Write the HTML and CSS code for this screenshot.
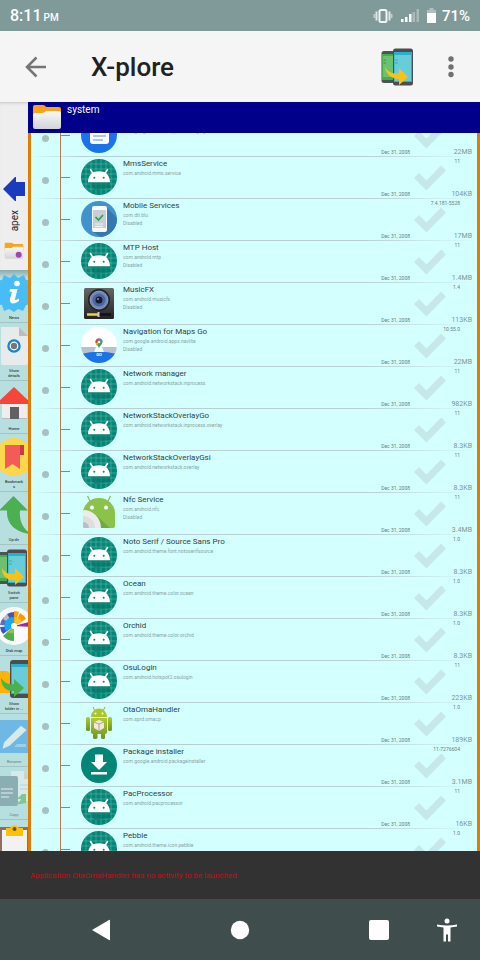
FILE: index.html
```
<!DOCTYPE html>
<html lang="en">
<head>
<meta charset="utf-8">
<meta name="viewport" content="width=device-width, initial-scale=1">
<title>X-plore</title>
<link rel="stylesheet" href="styles.css">
</head>
<body>
<svg class="defs" aria-hidden="true">
  <defs>
    <linearGradient id="g-folder" x1="0" y1="0" x2="0" y2="1"><stop offset="0" stop-color="#f8f8f8"/><stop offset="1" stop-color="#d2d4d8"/></linearGradient>
    <linearGradient id="g-speaker" x1="0" y1="0" x2="0" y2="1"><stop offset="0" stop-color="#666"/><stop offset=".5" stop-color="#444"/><stop offset="1" stop-color="#222"/></linearGradient>
    <linearGradient id="g-bot" x1="0" y1="0" x2="0" y2="1"><stop offset="0" stop-color="#b0cc2e"/><stop offset="1" stop-color="#6f9420"/></linearGradient>
    <clipPath id="c-round"><circle cx="18" cy="18" r="18"/></clipPath>
    <clipPath id="c-nfc"><path d="M2 32V18a16 15 0 0 1 32 0V31a2 2 0 0 1-2 2H3Z"/></clipPath>
    <symbol id="android" viewBox="0 0 36 36">
      <circle cx="18" cy="18" r="18" fill="#048676"/>
      <path clip-path="url(#c-round)" d="M5 0V36M10 0V36M15 0V36M20 0V36M25 0V36M30 0V36M0 5H36M0 10H36M0 15H36M0 20H36M0 25H36M0 30H36" stroke="#8fd0c6" stroke-opacity=".45" stroke-width=".8" fill="none"/>
      <path d="M8 23 14 31 30 29 29 23Z" fill="#037568" opacity=".6"/>
      <path d="M9.500 10.500 12 14.500M26.500 10.500 24 14.500" stroke="#fff" stroke-width="1.500" stroke-linecap="round"/>
      <path d="M7 23.300C7 17 11 12.800 14 12.800Q18 11.800 22 12.800C25 12.800 29 17 29 23.300Z" fill="#fff"/>
      <circle cx="13.300" cy="18.700" r="1" fill="#048676"/><circle cx="22.700" cy="18.700" r="1" fill="#048676"/>
    </symbol>
    <symbol id="check" viewBox="0 0 32 26"><path d="M0 13 5 8 12.500 15.500 27 0.500 32 5.500 12.500 25.500Z" fill="#c6e8e8"/></symbol>
    <symbol id="folder" viewBox="0 0 30 27">
      <path d="M1 3Q1 1 3 1H11Q13 1 14 3H27Q29 3 29 5V14H1Z" fill="#fba41b"/>
      <path d="M1 11Q1 9 3 9H11L14 7H27Q29 7 29 9V23Q29 25 27 25H3Q1 25 1 23Z" fill="url(#g-folder)"/>
    </symbol>
    <symbol id="phones" viewBox="0 0 32 38">
      <rect x=".5" y="3" width="18" height="32" rx="2.500" fill="#4b5354"/><path d="M1 6H13V32H1Z" fill="#48ab51"/><path d="M2 8H13V29H2Z" fill="#6cc070"/>
      <path d="M2.500 12H5M2.500 15H5" stroke="#42934b"/>
      <rect x="12" y=".5" width="20" height="37" rx="2.500" fill="#4c4c51"/><path d="M13 4H31V34H13Z" fill="#29b1c9"/><path d="M13.500 7H30V33H13.500Z" fill="#68cdd8"/><path d="M14 12H17M14 15H17" stroke="#49a5ae"/>
    </symbol>
  </defs>
</svg>

<header class="status">
  <span class="clock">8:11<small>PM</small></span>
  <span class="status-icons">
    <svg width="20" height="14" viewBox="0 0 20 14"><rect x="6.500" y="1" width="7" height="12" rx="1.500" fill="none" stroke="#f2f5f5" stroke-width="2"/><path d="M3.500 2.500V11.500M16.500 2.500V11.500" stroke="#dfe6e5" stroke-width="2"/><path d="M1.500 5V9M18.500 5V9" stroke="#c1cdcc" stroke-width="2"/></svg>
    <svg width="18" height="13" viewBox="0 0 18 13"><path d="M0 10H2.500V13H0ZM4 8H6.500V13H4ZM8 5H10.500V13H8Z" fill="#fff"/><path d="M11.500 3H14V13H11.500ZM15.500 0H18V13H15.500Z" fill="#a9bab8"/></svg>
    <svg width="9" height="15" viewBox="0 0 9 15"><path d="M2.500 0H6.500V2H9V6H0V2H2.500Z" fill="#b0bfbe"/><path d="M0 5H9V15H0Z" fill="#fff"/></svg>
    <span class="percent">71%</span>
  </span>
</header>

<div class="appbar">
  <button class="icon-btn" aria-label="Back"><svg width="22" height="22" viewBox="0 0 22 22"><path d="M21 11H2M11.500 1.500 2 11 11.500 20.500" fill="none" stroke="#757575" stroke-width="2.500"/></svg></button>
  <h1>X-plore</h1>
  <button class="icon-btn" aria-label="Switch pane"><svg width="32" height="38" viewBox="0 0 32 38"><use href="#phones"/><path d="M4 19C7 24 12 26 18 25.500V20L27 29 18 37V31C10 31 5 26 4 19Z" fill="#fdc113"/></svg></button>
  <button class="icon-btn more" aria-label="More options"><svg width="6" height="22" viewBox="0 0 6 22"><circle cx="3" cy="3" r="2.700" fill="#707070"/><circle cx="3" cy="11" r="2.700" fill="#707070"/><circle cx="3" cy="18.500" r="2.700" fill="#707070"/></svg></button>
</div>

<main class="content">
  <aside class="side">
    <button class="other-pane">
      <svg width="22" height="24" viewBox="0 0 22 24"><path d="M0 12 12 0H13V5H22V19H13V24H12Z" fill="#1a3bbd"/></svg>
      <span class="vertical">apex</span>
      <svg width="20" height="18" viewBox="0 0 30 27"><use href="#folder" width="30" height="27"/><circle cx="22" cy="19" r="4.500" fill="#a244ad"/></svg>
    </button>
    <nav class="tools">
      <button class="tool"><svg viewBox="0 0 38 38"><path d="M19 0 23 4 29 1 31 6 37 7 36 13 38 19 35 23 37 30 31 31 28 37 23 35 19 38 14 35 9 37 7 31 1 30 2 23 0 19 3 13 1 7 7 6 9 1 15 4Z" fill="#48bdf5"/><circle cx="22" cy="9.500" r="2.800" fill="#fff"/><path d="M15 15H22.500L20 25Q20 27 24 24.500V27C19 31 14 30 15 25L17 18 14.500 17.500Z" fill="#fff"/></svg><span>News</span></button>
      <button class="tool"><svg viewBox="0 0 38 38"><path d="M6 0H24L33 9V36Q33 38 31 38H8Q6 38 6 36Z" fill="#e8ebec"/><path d="M24 0 33 9H24Z" fill="#babdbe"/><circle cx="19" cy="19" r="5.500" fill="#777"/><circle cx="19" cy="19" r="5.500" fill="none" stroke="#1685ce" stroke-width="2.500"/><circle cx="19" cy="19" r="3.800" fill="none" stroke="#fff" stroke-width="1.200"/></svg><span>Show<br>details</span></button>
      <button class="tool"><svg viewBox="0 0 38 38"><path d="M7 16H32V34H7Z" fill="#eee"/><path d="M7 34H32V33H7Z" fill="#bbb"/><path d="M15 22H24V34H15Z" fill="#616161"/><path d="M19 2 37 19H1Z" fill="#f4473a"/></svg><span>Home</span></button>
      <button class="tool"><svg viewBox="0 0 38 38"><circle cx="19" cy="19" r="19" fill="#fcd64b"/><path d="M10 7H29V17H25V31L17.500 26 10 31Z" fill="#f35b5b"/><path d="M25 7H29V17H25Z" fill="#ca3c43"/></svg><span>Bookmark<br>s</span></button>
      <button class="tool"><svg viewBox="0 0 38 38"><path d="M18.500 0 33 14.500H25C24 25 28 33 36 38 22 37 11 29 12 14.500H4Z" fill="#4caf50"/></svg><span>Up dir</span></button>
      <button class="tool"><svg viewBox="0 0 38 38"><use href="#phones" width="32" height="38"/><path d="M7 19C10 24 13 25 20 25V19L29 28 20 36V31C12 32 7 27 7 19Z" fill="#fdc113"/></svg><span>Switch<br>pane</span></button>
      <button class="tool"><svg viewBox="0 0 38 38"><circle cx="19" cy="19" r="19" fill="#fafafa"/>
        <path d="M19 19V34A15 15 0 0 1 8 29Z" fill="#4caf50"/><path d="M19 19V26A8 8 0 0 1 12 25Z" fill="#8bc34a"/>
        <path d="M19 19 8 27A14 14 0 0 1 5 20Z" fill="#4356b8"/><path d="M19 19 5 18A14 14 0 0 1 9 10Z" fill="#5c6bc0"/><path d="M19 19 8 12A14 14 0 0 1 12 7Z" fill="#bdbdbd"/><path d="M19 19 12 7A14 14 0 0 1 19 5Z" fill="#4356b8"/>
        <path d="M19 19 11 24A9 9 0 0 1 19 10Z" fill="#15a9f2"/>
        <path d="M19 19V4A15 15 0 0 1 24 5Z" fill="#ffa000"/><path d="M19 19 25 6A14 14 0 0 1 31 12Z" fill="#ff9800"/><path d="M19 19 20 10A9 9 0 0 1 27 15Z" fill="#fbc02d"/>
        <path d="M19 19 38 14V20Z" fill="#9c27b0"/><circle cx="19" cy="19" r="3" fill="#fff"/></svg><span>Disk map</span></button>
      <button class="tool"><svg viewBox="0 0 38 38"><path d="M1 11H12L17 15V33H1Z" fill="#ffb300"/><rect x="15" y="0" width="22" height="38" rx="3" fill="#4c4c51"/><path d="M16 4H36V34H16Z" fill="#29b1c9"/><path d="M17 7H34V33H17Z" fill="#68cdd8"/><path d="M6 18C10 23 13 25 19 24V19L29 28 19 37V31C11 32 6 26 6 18Z" fill="#4caf50"/></svg><span>Show<br>folder in ...</span></button>
      <button class="tool off"><svg viewBox="0 0 38 38"><path d="M0 2H38V35H0Z" fill="#2793ed"/><path d="M10 25 26 9 30 12 14 27 9 29Z" fill="#f7f7f7" stroke="#f7f7f7" stroke-width="2"/><path d="M22 26H31V29H19Z" fill="#84c0f0"/></svg><span>Rename</span></button>
      <button class="tool off"><svg viewBox="0 0 38 38"><path d="M16 0H29L37 8V30H16Z" fill="#f5f5f5"/><path d="M29 0 37 8H29Z" fill="#ccc"/><rect x="0" y="5" width="23" height="30" rx="2" fill="#607d8b"/><path d="M6 18H18M6 22H18M6 26H14M25 14H33M25 18H33" stroke="#cfd8dc" stroke-width="1.500"/><path d="M15 33C21 33 25 32 26 28H22L27 23H31V32Q23 34 15 33Z" fill="#4caf50"/></svg><span>Copy</span></button>
      <button class="tool" aria-label="Clipboard"><svg viewBox="0 0 38 38"><rect x="3" y="3" width="32" height="40" rx="3" fill="#8d6e63"/><path d="M7 6H32V38H7Z" fill="#f2f2f2"/><path d="M11 4H15A5 5 0 0 1 24 4H28V12H11Z" fill="#ffc107"/><circle cx="19.500" cy="5" r="2" fill="#6d4c41"/></svg></button>
    </nav>
  </aside>

  <section class="pane">
    <h2 class="path"><svg width="30" height="27"><use href="#folder"/></svg><span>system</span></h2>
    <div class="viewport">
      <ul class="list">
        <li class="row"><i class="dot"></i><i class="tick"></i><svg class="app" viewBox="0 0 36 36"><circle cx="18" cy="18" r="18" fill="#1a73e8"/><rect x="9" y="9" width="19" height="18" rx="3" fill="#fff"/><path d="M12 14H25M12 19H25M12 23H22" stroke="#8ab4f8" stroke-width="1.500"/></svg><div class="info"><b></b><span>com.google.android.apps.messaging</span></div><time>Dec 31, 2008</time><svg class="check"><use href="#check"/></svg><span class="size">22MB</span></li>
        <li class="row"><i class="dot"></i><i class="tick"></i><svg class="app"><use href="#android"/></svg><div class="info"><b>MmsService</b><span>com.android.mms.service</span></div><time>Dec 31, 2008</time><svg class="check"><use href="#check"/></svg><span class="ver">11</span><span class="size">104KB</span></li>
        <li class="row"><i class="dot"></i><i class="tick"></i><svg class="app" viewBox="0 0 36 36"><circle cx="18" cy="18" r="18" fill="#4292d0"/><path clip-path="url(#c-round)" d="M25 6 38 19V36H20L12 31Z" fill="#3179ae"/><rect x="11" y="5" width="15" height="26" rx="2" fill="#f8f9fa"/><path d="M12 9H25V27H12Z" fill="#c8ced1"/><path d="M14.500 16 17.500 19 22 14" fill="none" stroke="#2ba158" stroke-width="1.700"/><path d="M14 23H22M14 25.500H22" stroke="#f5f5f5"/></svg><div class="info"><b>Mobile Services</b><span>com.dti.blu</span><span>Disabled</span></div><time>Dec 31, 2008</time><svg class="check"><use href="#check"/></svg><span class="ver">7.4.181-5528</span><span class="size">17MB</span></li>
        <li class="row"><i class="dot"></i><i class="tick"></i><svg class="app"><use href="#android"/></svg><div class="info"><b>MTP Host</b><span>com.android.mtp</span><span>Disabled</span></div><time>Dec 31, 2008</time><svg class="check"><use href="#check"/></svg><span class="ver">11</span><span class="size">1.4MB</span></li>
        <li class="row"><i class="dot"></i><i class="tick"></i><svg class="app" viewBox="0 0 36 36"><rect x="3" y="3" width="30" height="31" rx="1.500" fill="url(#g-speaker)"/><circle cx="18" cy="15" r="11" fill="#222"/><circle cx="18" cy="15" r="9" fill="#6e87bd" stroke="#aab3c4" stroke-width=".7"/><circle cx="18" cy="15" r="6.500" fill="#4a65a5"/><circle cx="18" cy="15" r="3.500" fill="#171b28"/><circle cx="17" cy="14" r="1" fill="#8593b5"/><path d="M6 29.500H18" stroke="#f0d23b" stroke-width="2.500"/><path d="M18 29.500H30" stroke="#111" stroke-width="2.500"/><path d="M17.500 27V32" stroke="#ccc" stroke-width="2"/></svg><div class="info"><b>MusicFX</b><span>com.android.musicfx</span><span>Disabled</span></div><time>Dec 31, 2008</time><svg class="check"><use href="#check"/></svg><span class="ver">1.4</span><span class="size">113KB</span></li>
        <li class="row"><i class="dot"></i><i class="tick"></i><svg class="app" viewBox="0 0 36 36"><g clip-path="url(#c-round)"><path d="M0 0H36V36H0Z" fill="#fff"/><path d="M0 20H36V30H0Z" fill="#b9c2cb"/><path d="M0 27Q18 22 36 27V36H0Z" fill="#1a73e8"/><path d="M16 18H20L23 25H13Z" fill="#fff"/></g><path d="M18 21.500C17 18 14.500 17.500 14.500 15A3.500 3.500 0 0 1 21.500 15C21.500 17.500 19 18 18 21.500Z" fill="#34a853"/><path d="M14.500 15A3.500 3.500 0 0 1 18 11.500V15L15.500 18Z" fill="#ea4335"/><path d="M18 11.500A3.500 3.500 0 0 1 21.500 15H18Z" fill="#4285f4"/><path d="M15 16 18 15 16 19Z" fill="#fbbc04"/><circle cx="18" cy="15" r="1.300" fill="#fff"/><text x="18" y="29" class="go">GO</text></svg><div class="info"><b>Navigation for Maps Go</b><span>com.google.android.apps.navlite</span><span>Disabled</span></div><time>Dec 31, 2008</time><svg class="check"><use href="#check"/></svg><span class="ver">10.55.0</span><span class="size">22MB</span></li>
        <li class="row"><i class="dot"></i><i class="tick"></i><svg class="app"><use href="#android"/></svg><div class="info"><b>Network manager</b><span>com.android.networkstack.inprocess</span></div><time>Dec 31, 2008</time><svg class="check"><use href="#check"/></svg><span class="ver">11</span><span class="size">982KB</span></li>
        <li class="row"><i class="dot"></i><i class="tick"></i><svg class="app"><use href="#android"/></svg><div class="info"><b>NetworkStackOverlayGo</b><span>com.android.networkstack.inprocess.overlay</span></div><time>Dec 31, 2008</time><svg class="check"><use href="#check"/></svg><span class="ver">11</span><span class="size">8.3KB</span></li>
        <li class="row"><i class="dot"></i><i class="tick"></i><svg class="app"><use href="#android"/></svg><div class="info"><b>NetworkStackOverlayGsi</b><span>com.android.networkstack.overlay</span></div><time>Dec 31, 2008</time><svg class="check"><use href="#check"/></svg><span class="ver">11</span><span class="size">8.3KB</span></li>
        <li class="row"><i class="dot"></i><i class="tick"></i><svg class="app" viewBox="0 0 36 36"><path d="M6.500 1 10 8M29.500 1 26 8" stroke="#8bc34a" stroke-width="1.200"/><g clip-path="url(#c-nfc)"><path d="M0 0H36V36H0Z" fill="#8bc34a"/><path d="M15 20 30 34H18Z" fill="#72a843"/><circle cx="2" cy="33" r="18" fill="#ececec"/><circle cx="2" cy="33" r="12" fill="#dedede"/><circle cx="2" cy="33" r="6" fill="#bdbdbd"/></g><circle cx="11" cy="12.500" r="2" fill="#fff"/><circle cx="25" cy="12.500" r="2" fill="#fff"/></svg><div class="info"><b>Nfc Service</b><span>com.android.nfc</span><span>Disabled</span></div><time>Dec 31, 2008</time><svg class="check"><use href="#check"/></svg><span class="ver">11</span><span class="size">3.4MB</span></li>
        <li class="row"><i class="dot"></i><i class="tick"></i><svg class="app"><use href="#android"/></svg><div class="info"><b>Noto Serif / Source Sans Pro</b><span>com.android.theme.font.notoserifsource</span></div><time>Dec 31, 2008</time><svg class="check"><use href="#check"/></svg><span class="ver">1.0</span><span class="size">8.3KB</span></li>
        <li class="row"><i class="dot"></i><i class="tick"></i><svg class="app"><use href="#android"/></svg><div class="info"><b>Ocean</b><span>com.android.theme.color.ocean</span></div><time>Dec 31, 2008</time><svg class="check"><use href="#check"/></svg><span class="ver">1.0</span><span class="size">8.3KB</span></li>
        <li class="row"><i class="dot"></i><i class="tick"></i><svg class="app"><use href="#android"/></svg><div class="info"><b>Orchid</b><span>com.android.theme.color.orchid</span></div><time>Dec 31, 2008</time><svg class="check"><use href="#check"/></svg><span class="ver">1.0</span><span class="size">8.3KB</span></li>
        <li class="row"><i class="dot"></i><i class="tick"></i><svg class="app"><use href="#android"/></svg><div class="info"><b>OsuLogin</b><span>com.android.hotspot2.osulogin</span></div><time>Dec 31, 2008</time><svg class="check"><use href="#check"/></svg><span class="ver">11</span><span class="size">223KB</span></li>
        <li class="row"><i class="dot"></i><i class="tick"></i><svg class="app" viewBox="0 0 36 36"><path d="M12 2 14 6M24 2 22 6" stroke="#93b32a"/><path d="M10 12A8 8.500 0 0 1 26 12Z" fill="#a9c72c"/><circle cx="14.500" cy="8.500" r="1" fill="#fff"/><circle cx="21.500" cy="8.500" r="1" fill="#fff"/><path d="M10 13H26V27Q26 29 24 29V33Q24 34 22.500 34 20 34 20 33V29H16.500V33Q16 34 14 34 12 34 12 33V29Q10 29 10 27Z" fill="url(#g-bot)"/><rect x="5" y="12" width="4" height="14" rx="1.500" fill="url(#g-bot)"/><rect x="27" y="12" width="4" height="14" rx="1.500" fill="url(#g-bot)"/><path d="M18 15 23 17V23L18 26 13 23V17Z" fill="#eee9dc"/><path d="M13 17 18 19 23 17M18 19V26" fill="none" stroke="#9a9484" stroke-width=".8"/></svg><div class="info"><b>OtaOmaHandler</b><span>com.sprd.omacp</span></div><time>Dec 31, 2008</time><svg class="check"><use href="#check"/></svg><span class="ver">1.0</span><span class="size">189KB</span></li>
        <li class="row"><i class="dot"></i><i class="tick"></i><svg class="app" viewBox="0 0 36 36"><circle cx="18" cy="18" r="18" fill="#048676"/><path d="M14 7.500H22V15H26L18 23 10 15H14ZM10 25H26V27.500H10Z" fill="#fff"/></svg><div class="info"><b>Package installer</b><span>com.google.android.packageinstaller</span></div><time>Dec 31, 2008</time><svg class="check"><use href="#check"/></svg><span class="ver">11-7276604</span><span class="size">3.1MB</span></li>
        <li class="row"><i class="dot"></i><i class="tick"></i><svg class="app"><use href="#android"/></svg><div class="info"><b>PacProcessor</b><span>com.android.pacprocessor</span></div><time>Dec 31, 2008</time><svg class="check"><use href="#check"/></svg><span class="ver">11</span><span class="size">16KB</span></li>
        <li class="row"><i class="dot"></i><i class="tick"></i><svg class="app"><use href="#android"/></svg><div class="info"><b>Pebble</b><span>com.android.theme.icon.pebble</span></div><svg class="check"><use href="#check"/></svg><span class="ver">1.0</span></li>
      </ul>
    </div>
  </section>
</main>

<div class="toast" role="status">Application OtaOmaHandler has no activity to be launched</div>

<footer class="navbar">
  <button class="nav-back" aria-label="Back"><svg width="20" height="22" viewBox="0 0 20 22"><path d="M1 11 18 1Q19 .5 19 1.500V20.500Q19 21.500 18 21Z" fill="#fff"/></svg></button>
  <button class="nav-home" aria-label="Home"><svg width="20" height="20" viewBox="0 0 20 20"><circle cx="10" cy="10" r="9.200" fill="#fff"/></svg></button>
  <button class="nav-recent" aria-label="Recent apps"><svg width="20" height="20" viewBox="0 0 20 20"><rect width="20" height="20" rx="2" fill="#fff"/></svg></button>
  <button class="nav-access" aria-label="Accessibility"><svg width="22" height="24" viewBox="0 0 22 24"><circle cx="11" cy="3" r="2.500" fill="#fff"/><path d="M1 6.500Q11 8.500 21 6.500V8.500L14.500 9.500V23.500H12V16.500H10V23.500H7.500V9.500L1 8.500Z" fill="#fff"/></svg></button>
</footer>
</body>
</html>
```
FILE: styles.css
```
* { box-sizing: border-box; }

body {
  margin: 0;
  height: 100vh;
  display: flex;
  flex-direction: column;
  overflow: hidden;
  font-family: Roboto, "Liberation Sans", sans-serif;
  background: #f5f5f5;
}

button {
  margin: 0;
  padding: 0;
  border: 0;
  background: none;
  color: inherit;
  font: inherit;
}

svg { display: block; flex: none; }
.defs { position: absolute; width: 0; height: 0; }

/* Status bar */
.status {
  flex: none;
  height: 31px;
  padding: 0 10px;
  display: flex;
  align-items: center;
  justify-content: space-between;
  background: #7f9a98;
  color: #fff;
  font-size: 16px;
  font-weight: 500;
}
.clock small { margin-left: 2px; font-size: 10px; }
.status-icons { display: flex; align-items: center; gap: 8px; }
.percent { margin-left: -2px; font-size: 15px; }

/* App bar */
.appbar {
  flex: none;
  height: 71px;
  padding: 0 26px 0 25px;
  display: flex;
  align-items: center;
  background: #f5f5f5;
}
.appbar h1 {
  flex: 1;
  margin: 0 0 0 44px;
  font-size: 26px;
  font-weight: 500;
  color: #212121;
}
.icon-btn { display: flex; }
.more { margin-left: 35px; }

/* Panes */
.content { flex: 1; min-height: 0; display: flex; }

.side {
  flex: none;
  width: 28px;
  display: flex;
  flex-direction: column;
  overflow: hidden;
  background: #eee;
  box-shadow: inset 0 3px 3px -2px #c4c4c4;
}
.other-pane {
  flex: none;
  height: 168px;
  padding-bottom: 10px;
  display: flex;
  flex-direction: column;
  justify-content: flex-end;
  align-items: center;
}
.vertical {
  margin: 9px 0 11px;
  padding-right: 1px;
  writing-mode: vertical-rl;
  transform: rotate(180deg);
  font-size: 10px;
  line-height: 12px;
  color: #222;
}

.tools {
  flex: 1;
  min-height: 0;
  overflow: hidden;
  display: flex;
  flex-direction: column;
  background: linear-gradient(#8fa9a9, #b8dfdf 8px);
}
.tool {
  flex: none;
  padding: 4px 0 2px;
  display: flex;
  flex-direction: column;
  align-items: center;
  border-bottom: 1px solid #a3c4c4;
  font-size: 4px;
  line-height: 5px;
  text-align: center;
  color: #111;
}
.tool svg { width: 38px; height: 38px; margin-bottom: 3px; }
.off svg, .off span { opacity: .5; }

.pane {
  flex: 1;
  min-width: 0;
  display: flex;
  flex-direction: column;
}
.path {
  flex: none;
  height: 31px;
  margin: 0;
  padding: 2px 4px;
  display: flex;
  gap: 5px;
  background: #00008b;
  color: #fff;
  font-size: 10px;
  line-height: 12px;
  font-weight: 400;
}
.viewport {
  flex: 1;
  min-height: 0;
  overflow: hidden;
  border: solid #e07c00;
  border-width: 0 3px;
  background: #d4ffff;
}

/* The list is scrolled part of the way into its first row */
.list { margin: -18px 0 0; padding: 0; list-style: none; }

.row {
  height: 42px;
  padding-right: 5px;
  display: grid;
  grid-template-columns: 29px 21px 36px 1fr 36px 32px 26px;
  grid-template-rows: 8px 25px 8px;
  background:
    linear-gradient(#b47c4e, #b47c4e) 29px 0 / 1px 100% no-repeat,
    linear-gradient(90deg, #d4ffff, #b9cfd3 50px, #b9cfd3 75%, #d4ffff) 0 100% / 100% 1px no-repeat;
}
.dot, .tick, .app, .info { grid-row: 1 / -1; }
.dot {
  grid-column: 1;
  width: 7px;
  height: 7px;
  margin: 20px 0 0 11px;
  border-radius: 50%;
  background: #a9c0c0;
}
.tick { grid-column: 2; width: 10px; height: 1px; margin-top: 20px; background: #b47c4e; }
.app { grid-column: 3; width: 36px; height: 36px; margin-top: 2px; }
.go { fill: #fff; font-size: 4px; font-weight: 700; text-anchor: middle; }

.info {
  grid-column: 4;
  min-width: 0;
  padding: 2px 0 0 6px;
  display: flex;
  flex-direction: column;
  font-size: 5px;
  line-height: 8px;
  color: #87a5a5;
  white-space: nowrap;
}
.info b {
  height: 10px;
  font-size: 8px;
  line-height: 10px;
  font-weight: 400;
  color: #2f4242;
}
.row time, .row .ver, .row .size {
  font-size: 5px;
  line-height: 8px;
  color: #668080;
  text-align: right;
  white-space: nowrap;
}
.row time { grid-area: 3 / 5 / 4 / 6; margin-right: 4px; }
.row .check { grid-area: 2 / 6 / 3 / 7; width: 32px; height: 26px; }
.row .ver { grid-area: 1 / 6 / 2 / 8; margin-right: 12px; }
.row .size { grid-area: 3 / 7 / 4 / 8; font-size: 7px; color: #7b9696; }

/* Message strip */
.toast {
  flex: none;
  height: 48px;
  padding: 0 30px;
  display: flex;
  align-items: center;
  background: #323232;
  color: #c40f14;
  font-size: 8px;
}

/* System navigation */
.navbar {
  flex: none;
  height: 61px;
  display: grid;
  grid-template-columns: 42% 16% 42%;
  align-items: center;
  background: #3f4d4d;
}
.navbar button { grid-row: 1; justify-self: center; }
.nav-back { grid-column: 1; }
.nav-home { grid-column: 2; }
.nav-recent { grid-column: 3; }
.navbar .nav-access { grid-column: 3; justify-self: end; margin-right: 22px; }
```
